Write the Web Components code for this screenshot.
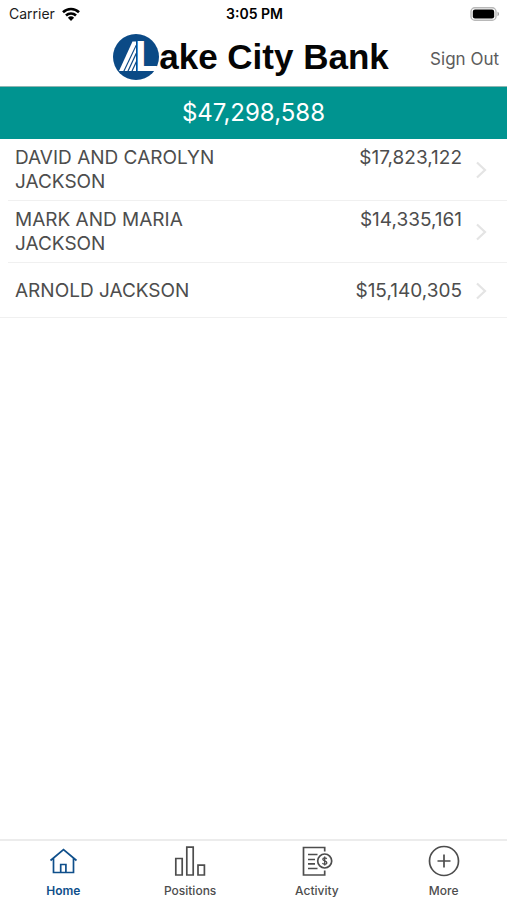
<!DOCTYPE html>
<html lang="en">
<head>
<meta charset="utf-8">
<meta name="viewport" content="width=device-width, initial-scale=1">
<title>Lake City Bank</title>
<style>
  body {
    background: #ffffff;
    color: #4d4d4d;
    font-family: Inter, 'Helvetica Neue', Arial, sans-serif;
    margin: 0;
  }
</style>
</head>
<body>
<lcb-app>
  <lcb-status-bar slot="top" carrier="Carrier" time="3:05 PM"></lcb-status-bar>
  <lcb-header slot="top"></lcb-header>
  <lcb-total slot="top">$47,298,588</lcb-total>

  <lcb-account amount="$17,823,122">DAVID AND CAROLYN JACKSON</lcb-account>
  <lcb-account amount="$14,335,161">MARK AND MARIA JACKSON</lcb-account>
  <lcb-account amount="$15,140,305">ARNOLD JACKSON</lcb-account>

  <lcb-tab slot="tabs" href="#home" selected>
    <svg slot="icon" viewBox="0 0 32 32" width="32" height="32" fill="none" stroke="currentColor" stroke-width="1.7">
      <path d="M3.500 15.500 16.500 4.500l13 11M6.500 13.500V27.500h20V13.500M13.700 27.500V19.500h5.200v8"/>
    </svg>
    Home
  </lcb-tab>
  <lcb-tab slot="tabs" href="#positions">
    <svg slot="icon" viewBox="0 0 32 32" width="32" height="32" fill="none" stroke="currentColor" stroke-width="1.7">
      <path d="M1.800 13.500h6.400v16.500H1.800zM12.800 2.200h6.400V30h-6.400zM24 20.200h6.400V30H24z"/>
    </svg>
    Positions
  </lcb-tab>
  <lcb-tab slot="tabs" href="#activity">
    <svg slot="icon" viewBox="0 0 32 32" width="32" height="32" fill="none" stroke="currentColor" stroke-width="1.7">
      <path d="M23.700 6.500V2.500H2.500V30h21.200v-4.500M7 9.500h9.500M7 14.500h7M7 18.800h7M7 23.500h9.500"/>
      <circle cx="23.700" cy="16" r="7"/>
      <path stroke-width="1.300" d="M25.700 13.900c-.4-.8-1.100-1-2-1-1.100 0-1.900.5-1.900 1.400 0 2.200 4 1 4 3.400 0 1-.9 1.500-2.100 1.500-1 0-1.800-.4-2.200-1.200M23.700 11.500v9"/>
    </svg>
    Activity
  </lcb-tab>
  <lcb-tab slot="tabs" href="#more">
    <svg slot="icon" viewBox="0 0 32 32" width="32" height="32" fill="none" stroke="currentColor" stroke-width="1.7">
      <circle cx="16" cy="16" r="14.500"/>
      <path d="M9.500 16h13M16 9.500v13"/>
    </svg>
    More
  </lcb-tab>
</lcb-app>

<script>
  // Page frame: top bars, list, tab bar
  class LCBApp extends HTMLElement {
    constructor() {
      super();

      const template = document.createElement( 'template' );
      template.innerHTML = /* template */ `
        <style>
          :host {
            display: flex;
            flex-direction: column;
            min-height: 100vh;
          }

          main {
            border-bottom: solid 1px #f0f0f0;
          }

          nav {
            border-top: solid 2px #ececec;
            display: grid;
            grid-template-columns: repeat( 4, 1fr );
            margin-top: auto;
          }
        </style>
        <slot name="top"></slot>
        <main><slot></slot></main>
        <nav aria-label="Main"><slot name="tabs"></slot></nav>
      `;

      this.attachShadow( {mode: 'open'} );
      this.shadowRoot.appendChild( template.content.cloneNode( true ) );
    }
  }

  window.customElements.define( 'lcb-app', LCBApp );

  class LCBStatusBar extends HTMLElement {
    constructor() {
      super();

      const template = document.createElement( 'template' );
      template.innerHTML = /* template */ `
        <style>
          :host {
            align-items: center;
            box-sizing: border-box;
            color: #1c1c1c;
            display: grid;
            font-size: 14px;
            grid-template-columns: 1fr auto 1fr;
            height: 28px;
            line-height: 20px;
            padding: 0 7px 0 9px;
          }

          div {
            align-items: center;
            display: flex;
            gap: 7px;
          }

          strong {
            color: #000000;
            font-size: 14px;
            font-weight: 600;
          }

          svg {
            display: block;
          }

          .battery {
            justify-self: end;
          }
        </style>
        <div>
          <span part="carrier"></span>
          <svg width="18" height="14" viewBox="0 0 18 14" fill="none" stroke="#000000" stroke-width="2.600">
            <path d="M1 5.200a11.500 11.500 0 0 1 16 0M4 8.500a7.200 7.200 0 0 1 10 0"/>
            <path fill="#000000" stroke="none" d="M9 14 5.900 10.800a4.500 4.500 0 0 1 6.200 0z"/>
          </svg>
        </div>
        <strong part="time"></strong>
        <svg class="battery" width="30" height="14" viewBox="0 0 30 14">
          <rect x="1" y=".8" width="25" height="12.400" rx="3.800" fill="#ffffff" stroke="#b8b8b8" stroke-width="1.400"/>
          <rect x="2.800" y="2.500" width="21.400" height="9" rx="2.200" fill="#000000"/>
          <path d="M27.500 4.800c2 .7 2 3.700 0 4.400z" fill="#a0a0a0"/>
        </svg>
      `;

      this.attachShadow( {mode: 'open'} );
      this.shadowRoot.appendChild( template.content.cloneNode( true ) );
      this.$carrier = this.shadowRoot.querySelector( '[part=carrier]' );
      this.$time = this.shadowRoot.querySelector( '[part=time]' );
    }

    connectedCallback() {
      this.$carrier.innerText = this.getAttribute( 'carrier' );
      this.$time.innerText = this.getAttribute( 'time' );
    }
  }

  window.customElements.define( 'lcb-status-bar', LCBStatusBar );

  class LCBHeader extends HTMLElement {
    constructor() {
      super();

      const template = document.createElement( 'template' );
      template.innerHTML = /* template */ `
        <style>
          :host {
            align-items: center;
            box-sizing: border-box;
            display: grid;
            grid-template-columns: 1fr auto 1fr;
            height: 58px;
            padding: 0 8px 0 3px;
          }

          h1 {
            align-items: center;
            color: #050505;
            display: flex;
            font-family: 'Liberation Sans', Arial, sans-serif;
            font-size: 35px;
            font-weight: 700;
            grid-column: 2;
            line-height: 48px;
            margin: 0;
            white-space: nowrap;
          }

          svg {
            display: block;
          }

          button {
            background: none;
            border: none;
            color: #5c5c5c;
            cursor: pointer;
            font-family: inherit;
            font-size: 17px;
            justify-self: end;
            line-height: 24px;
            padding: 6px 0 3px 0;
            white-space: nowrap;
          }
        </style>
        <h1>
          <svg width="46" height="48" viewBox="0 0 46 48">
            <circle cx="23" cy="24" r="23" fill="#0b4a86"/>
            <g fill="#ffffff">
              <path d="M6 38 19.500 8.500H23v3L10.300 38z"/>
              <path d="M11.600 38 23 14v5.500L14.400 38z"/>
              <path d="M15.700 38 23 22.500v5.500L18.400 38z"/>
              <path d="M19.700 38 23 31v7z"/>
              <text x="22" y="38" font-family="Roboto, Arial, sans-serif" font-size="42" font-weight="700">L</text>
            </g>
          </svg>ake City Bank
        </h1>
        <button type="button">Sign Out</button>
      `;

      this.attachShadow( {mode: 'open'} );
      this.shadowRoot.appendChild( template.content.cloneNode( true ) );
    }
  }

  window.customElements.define( 'lcb-header', LCBHeader );

  class LCBTotal extends HTMLElement {
    constructor() {
      super();

      const template = document.createElement( 'template' );
      template.innerHTML = /* template */ `
        <style>
          :host {
            background: #009490;
            border-top: solid 1px #8fb5b2;
            box-sizing: border-box;
            color: #ffffff;
            display: block;
            font-size: 24px;
            line-height: 28px;
            padding: 12px 8px;
            text-align: center;
          }
        </style>
        <slot></slot>
      `;

      this.attachShadow( {mode: 'open'} );
      this.shadowRoot.appendChild( template.content.cloneNode( true ) );
    }
  }

  window.customElements.define( 'lcb-total', LCBTotal );

  class LCBAccount extends HTMLElement {
    constructor() {
      super();

      const template = document.createElement( 'template' );
      template.innerHTML = /* template */ `
        <style>
          :host {
            display: block;
            margin-left: 8px;
          }

          :host( :not( :last-of-type ) ) {
            border-bottom: solid 1px #f0f0f0;
          }

          a {
            align-items: center;
            box-sizing: border-box;
            color: inherit;
            display: flex;
            font-size: 19px;
            gap: 12px;
            line-height: 24px;
            min-height: 54px;
            padding: 7px 18px 6px 7px;
            text-decoration: none;
          }

          div {
            display: flex;
            flex: 1;
            gap: 16px;
            justify-content: space-between;
          }

          .name {
            flex: 0 1 220px;
          }

          svg {
            display: block;
          }
        </style>
        <a href="#account">
          <div>
            <span class="name"><slot></slot></span>
            <span class="amount"></span>
          </div>
          <svg width="15" height="20" viewBox="0 0 15 20" fill="none" stroke="#e4e4e4" stroke-width="2.200">
            <path d="M3 2.500 11 10l-8 7.500"/>
          </svg>
        </a>
      `;

      this.attachShadow( {mode: 'open'} );
      this.shadowRoot.appendChild( template.content.cloneNode( true ) );
      this.$amount = this.shadowRoot.querySelector( '.amount' );
    }

    connectedCallback() {
      this.$amount.innerText = this.getAttribute( 'amount' );
    }
  }

  window.customElements.define( 'lcb-account', LCBAccount );

  class LCBTab extends HTMLElement {
    constructor() {
      super();

      const template = document.createElement( 'template' );
      template.innerHTML = /* template */ `
        <style>
          :host {
            display: block;
          }

          a {
            align-items: center;
            color: #4d4d4d;
            display: flex;
            flex-direction: column;
            font-size: 12px;
            font-weight: 500;
            gap: 6px;
            line-height: 16px;
            padding: 4px 0 1px 0;
            text-decoration: none;
          }

          :host( [selected] ) a {
            color: #0f4f8b;
            font-weight: 600;
          }

          ::slotted( svg ) {
            display: block;
          }
        </style>
        <a>
          <slot name="icon"></slot>
          <span><slot></slot></span>
        </a>
      `;

      this.attachShadow( {mode: 'open'} );
      this.shadowRoot.appendChild( template.content.cloneNode( true ) );
      this.$link = this.shadowRoot.querySelector( 'a' );
    }

    connectedCallback() {
      this.$link.href = this.getAttribute( 'href' );

      if( this.hasAttribute( 'selected' ) ) {
        this.$link.setAttribute( 'aria-current', 'page' );
      }
    }
  }

  window.customElements.define( 'lcb-tab', LCBTab );
</script>
</body>
</html>
